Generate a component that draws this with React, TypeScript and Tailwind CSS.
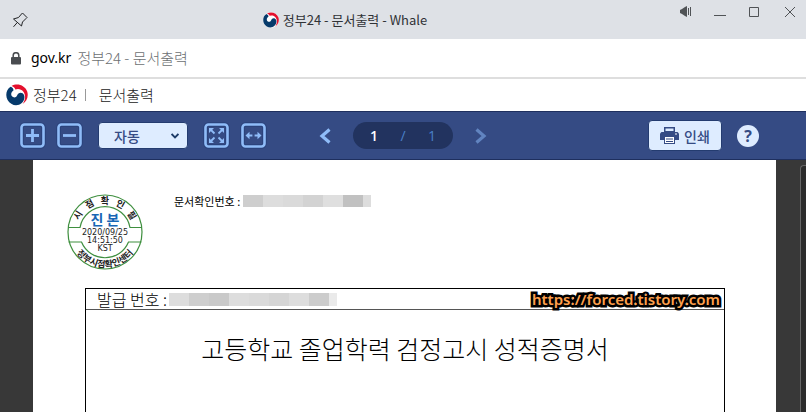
import { useState } from "react";

const KR = "font-['Noto_Sans_CJK_KR',sans-serif]";

function GovLogo({ className }: { className: string }) {
  return (
    <svg viewBox="0 0 22 22" className={className} aria-hidden="true">
      <circle cx="11" cy="11" r="10.5" fill="#fff" />
      <path
        d="M5.5 2C11.5-1.4 19 1.4 21.2 7.6C22.8 12.6 20.6 17.4 16.6 20C19.4 16.4 20 11.6 17.6 8C15.2 4.4 11.4 4.6 9.4 5.4C8.8 3.8 7.4 2.6 5.5 2Z"
        fill="#e4102d"
      />
      <path
        d="M4.6 2.8C.2 5.6-.9 11.6 1.6 16C4.6 21.4 11.4 23 15.8 19C19.2 16 19.2 10.8 16.6 9.2C14 7.8 12 9.4 11.2 11.2C10.2 13.6 7.8 14 6.2 12.6C4.4 10.8 5.2 8 7.4 6.6C7.8 5 6.4 3.4 4.6 2.8Z"
        fill="#063a6b"
      />
    </svg>
  );
}

function Redacted({ tones, className }: { tones: string[]; className: string }) {
  return (
    <span className={`flex ${className}`} aria-hidden="true">
      {tones.map((tone, i) => (
        <span key={i} className={`h-full w-5 last:w-2 ${tone}`} />
      ))}
    </span>
  );
}

const iconButton = "flex size-[25px] items-center justify-center";

function BoxIcon({ children }: { children: React.ReactNode }) {
  return (
    <svg viewBox="0 0 25 25" className="size-[25px] overflow-visible" fill="none" stroke="#8fbcf8" aria-hidden="true">
      <rect x="1.5" y="1.5" width="22" height="22" rx="3" stroke="#29417a" strokeWidth="4.4" />
      <rect x="1.5" y="1.5" width="22" height="22" rx="3" strokeWidth="2.6" />
      {children}
    </svg>
  );
}

function Stamp() {
  return (
    <svg viewBox="0 0 76 76" className={`size-[76px] ${KR}`} role="img" aria-label="시점확인필 진본">
      <defs>
        <path id="upper" d="M9.5 38A28.5 28.5 0 0 1 66.5 38" />
        <path id="lower" d="M2.5 38A35.5 35.5 0 0 0 73.5 38" />
      </defs>
      <g fill="none" stroke="#3f8f3f" strokeWidth="1.2">
        <circle cx="38" cy="38" r="37" />
        <path d="M1.5 33.5H13A25.4 25.4 0 0 1 63 33.5H74.5" />
        <path d="M1.5 48H14.5A25.4 25.4 0 0 0 61.5 48H74.5" />
      </g>
      <g textAnchor="middle" fill="#222">
        <text fontSize="9" fontWeight="700">
          <textPath href="#upper" startOffset="50%">시&#160;&#160;&#160;점&#160;&#160;&#160;확&#160;&#160;&#160;인&#160;&#160;&#160;필</textPath>
        </text>
        <text fontSize="9" fontWeight="700">
          <textPath href="#lower" startOffset="50%">정부시점확인센터</textPath>
        </text>
        <text x="38" y="31" fontSize="14" fontWeight="700" fill="#1766b5">진 본</text>
        <g fontSize="8" className="font-['DejaVu_Sans',sans-serif]">
          <text x="38" y="41">2020/09/25</text>
          <text x="38" y="49">14:51:50</text>
          <text x="38" y="57">KST</text>
        </g>
      </g>
    </svg>
  );
}

export default function App() {
  const [page, setPage] = useState("1");
  return (
    <div className={`flex h-screen flex-col overflow-hidden bg-white ${KR}`}>
      <header className="flex h-[39px] shrink-0 bg-[#dee1e6]">
        <button aria-label="고정" className="flex w-10 shrink-0 items-center justify-center">
          <svg viewBox="0 0 16 16" className="size-4" fill="none" stroke="#202124" aria-hidden="true">
            <path d="M9.5 2L10.5 1L15 5.5L14 6.5L10.5 10L9.5 14L1.5 7L6.5 5.5ZM5.3 10.5L1.5 14.8" />
          </svg>
        </button>
        <h1 className="flex flex-1 items-center justify-center gap-1 pr-4 text-[13px] text-[#303236]">
          <GovLogo className="size-4" />
          정부24 - 문서출력 - Whale
        </h1>
        <div className="flex h-[23px] shrink-0 items-center justify-end text-[#505356]">
          <button aria-label="소리" className="flex w-10 justify-center">
            <svg viewBox="0 0 12 11" className="h-[11px] w-3" fill="currentColor" aria-hidden="true">
              <path d="M0 4L2 3L5 1L7 0V11L5 10L2 8L0 7ZM8 2H9V9H8ZM10 1H11V10H10Z" />
            </svg>
          </button>
          <button aria-label="최소화" className="flex w-7 justify-center">
            <svg viewBox="0 0 12 11" className="h-[11px] w-3" aria-hidden="true"><path d="M0 9.5H12" stroke="currentColor" /></svg>
          </button>
          <button aria-label="최대화" className="flex w-10 justify-center">
            <svg viewBox="0 0 10 10" className="size-[10px]" fill="none" aria-hidden="true"><path d="M.5.5H9.5V9.5H.5Z" stroke="currentColor" /></svg>
          </button>
          <button aria-label="닫기" className="flex w-8 justify-center">
            <svg viewBox="0 0 10 10" className="size-[10px]" fill="none" aria-hidden="true"><path d="M0 0L10 10M10 0L0 10" stroke="currentColor" /></svg>
          </button>
        </div>
      </header>

      <div className="flex h-10 shrink-0 items-center border-b-2 border-[#dedede] pl-[11px]">
        <svg viewBox="0 0 10 13" className="mr-[10px] h-[13px] w-[10px]" aria-hidden="true">
          <path d="M2.2 6V3.5A2.8 2.8 0 0 1 7.8 3.5V6" fill="none" stroke="#494c50" strokeWidth="1.5" />
          <rect y="5" width="10" height="7.5" rx="1" fill="#494c50" />
        </svg>
        <span className="mr-[6px] font-['Noto_Sans',sans-serif] text-sm text-black">gov.kr</span>
        <span className="text-[15px] font-light text-[#6c6f72]">정부24 - 문서출력</span>
      </div>

      <div className="flex h-8 shrink-0 items-center pl-[6px] text-[15px] font-light text-[#222]">
        <GovLogo className="mr-[5px] size-[22px]" />
        <span>정부24</span>
        <span className="mx-2 h-3 w-px bg-[#999]" />
        <span className="pl-[5px]">문서출력</span>
      </div>

      <nav className="grid h-[49px] shrink-0 grid-cols-[1fr_auto_1fr] items-center border-y border-[#1e2f5e] bg-[#354b84] text-[#354b84]">
        <div className="flex items-center pl-5">
          <button aria-label="확대" className={`mr-3 ${iconButton}`}>
            <BoxIcon><path d="M6 12.5H19M12.5 6V19" strokeWidth="2.8" /></BoxIcon>
          </button>
          <button aria-label="축소" className={`mr-4 ${iconButton}`}>
            <BoxIcon><path d="M6 12.5H19" strokeWidth="2.8" /></BoxIcon>
          </button>
          <div className="relative mr-4">
            <select aria-label="배율" className="h-[27px] w-[90px] appearance-none rounded-[4px] border border-[#243c70] bg-[#deecff] pl-[15px] text-sm font-medium">
              <option>자동</option>
              <option>100%</option>
            </select>
            <svg viewBox="0 0 8 6" className="pointer-events-none absolute top-[11px] right-[9px] h-[6px] w-2" fill="none" aria-hidden="true">
              <path d="M.6 1L4 4.4L7.4 1" stroke="#1c3a66" strokeWidth="1.8" />
            </svg>
          </div>
          <button aria-label="쪽 맞춤" className={`mr-3 ${iconButton}`}>
            <BoxIcon>
              <path d="M6 6L10.5 10.5M19 6L14.5 10.5M6 19L10.5 14.5M19 19L14.5 14.5" strokeWidth="1.8" />
              <path d="M5 5H10L5 10ZM20 5H15L20 10ZM5 20H10L5 15ZM20 20H15L20 15Z" fill="#8fbcf8" stroke="none" />
            </BoxIcon>
          </button>
          <button aria-label="폭 맞춤" className={iconButton}>
            <BoxIcon>
              <path d="M6 12.5H11.4M13.6 12.5H19" strokeWidth="1.8" />
              <path d="M4.5 12.5L8.5 8.8V16.2ZM20.5 12.5L16.5 8.8V16.2Z" fill="#8fbcf8" stroke="none" />
            </BoxIcon>
          </button>
        </div>
        <div className="flex items-center gap-[22px]">
          <button aria-label="이전 쪽">
            <svg viewBox="0 0 12 16" className="h-4 w-3" fill="none" stroke="#8fbcf8" strokeWidth="3.2" aria-hidden="true"><path d="M10.5 1.5L3 8L10.5 14.5" /></svg>
          </button>
          <div className="flex h-[27px] w-[100px] items-center justify-between rounded-full bg-[#22335f] px-[17px] font-['Open_Sans',sans-serif] text-sm text-[#4a80c8]">
            <input aria-label="쪽" value={page} onChange={(e) => setPage(e.target.value)} className="w-2 font-semibold text-white" />
            <span>/</span>
            <span>1</span>
          </div>
          <button aria-label="다음 쪽">
            <svg viewBox="0 0 12 16" className="h-4 w-3" fill="none" stroke="#6184c0" strokeWidth="3.2" aria-hidden="true"><path d="M1.5 1.5L9 8L1.5 14.5" /></svg>
          </button>
        </div>
        <div className="flex items-center justify-end gap-[15px] pr-[47px]">
          <button className="flex h-[31px] w-[74px] items-center justify-center gap-[5px] rounded-[4px] border border-[#243c70] bg-[#deecff] text-sm font-medium">
            <svg viewBox="0 0 19 17" className="h-[17px] w-[19px]" aria-hidden="true">
              <path d="M4 0H15V5H4Z" fill="#354b84" />
              <path d="M5.5 1.5H13.5V4H5.5Z" fill="#deecff" />
              <path d="M1.5 5H17.5L19 6.5V13H0V6.5Z" fill="#354b84" />
              <path d="M4 9H15V17H4Z" fill="#354b84" />
              <path d="M5 10H14V16H5Z" fill="#fff" />
              <path d="M6 12H13M6 14.5H13" stroke="#354b84" />
              <path d="M15 7H17" stroke="#fff" />
            </svg>
            인쇄
          </button>
          <button aria-label="도움말" className="flex size-[22px] items-center justify-center rounded-full bg-[#deecff] font-['Open_Sans',sans-serif] text-base leading-none font-bold">
            ?
          </button>
        </div>
      </nav>

      <main className="flex min-h-0 flex-1 bg-[#383838]">
        <article className="mr-6 ml-[33px] flex-1 overflow-hidden bg-white pr-[51px] pl-[34px] text-black">
          <div className="flex pt-[34px]">
            <Stamp />
            <p className="ml-[31px] flex h-[14px] items-center gap-[3px] text-[11px]">
              문서확인번호 :
              <Redacted
                className="h-3"
                tones={["bg-[#cecece]", "bg-[#dddddd]", "bg-[#dadada]", "bg-[#d3d3d3]", "bg-[#dfdfdf]", "bg-[#c1c1c1]", "bg-[#dddddd]"]}
              />
            </p>
          </div>
          <section className="mt-[18px] ml-[18px] h-60 border border-black">
            <div className="flex h-[21px] items-center justify-between border-b border-[#555] pr-1 pl-[11px]">
              <p className="flex items-center gap-[2px] text-base leading-none font-light">
                발급 번호 :
                <Redacted
                  className="h-[13px]"
                  tones={["bg-[#dddddd]", "bg-[#cecece]", "bg-[#c9c9c9]", "bg-[#dddddd]", "bg-[#dadada]", "bg-[#d5d5d5]", "bg-[#dddddd]", "bg-[#cccccc]", "bg-[#eaeaea]"]}
                />
              </p>
              <a
                href="https://forced.tistory.com"
                className="font-['Noto_Sans',sans-serif] text-[15px] leading-none font-semibold text-[#ffa14d] [paint-order:stroke_fill] [stroke-linejoin:round] [-webkit-text-stroke:5px_black]"
              >
                https://forced.tistory.com
              </a>
            </div>
            <h2 className="pt-5 text-center text-[25px] font-light">고등학교 졸업학력 검정고시 성적증명서</h2>
          </section>
        </article>
        <div className="mt-[5px] w-[6px] rounded-tl border-t border-l border-[#666] bg-[#2b2b2b]" />
      </main>
    </div>
  );
}
